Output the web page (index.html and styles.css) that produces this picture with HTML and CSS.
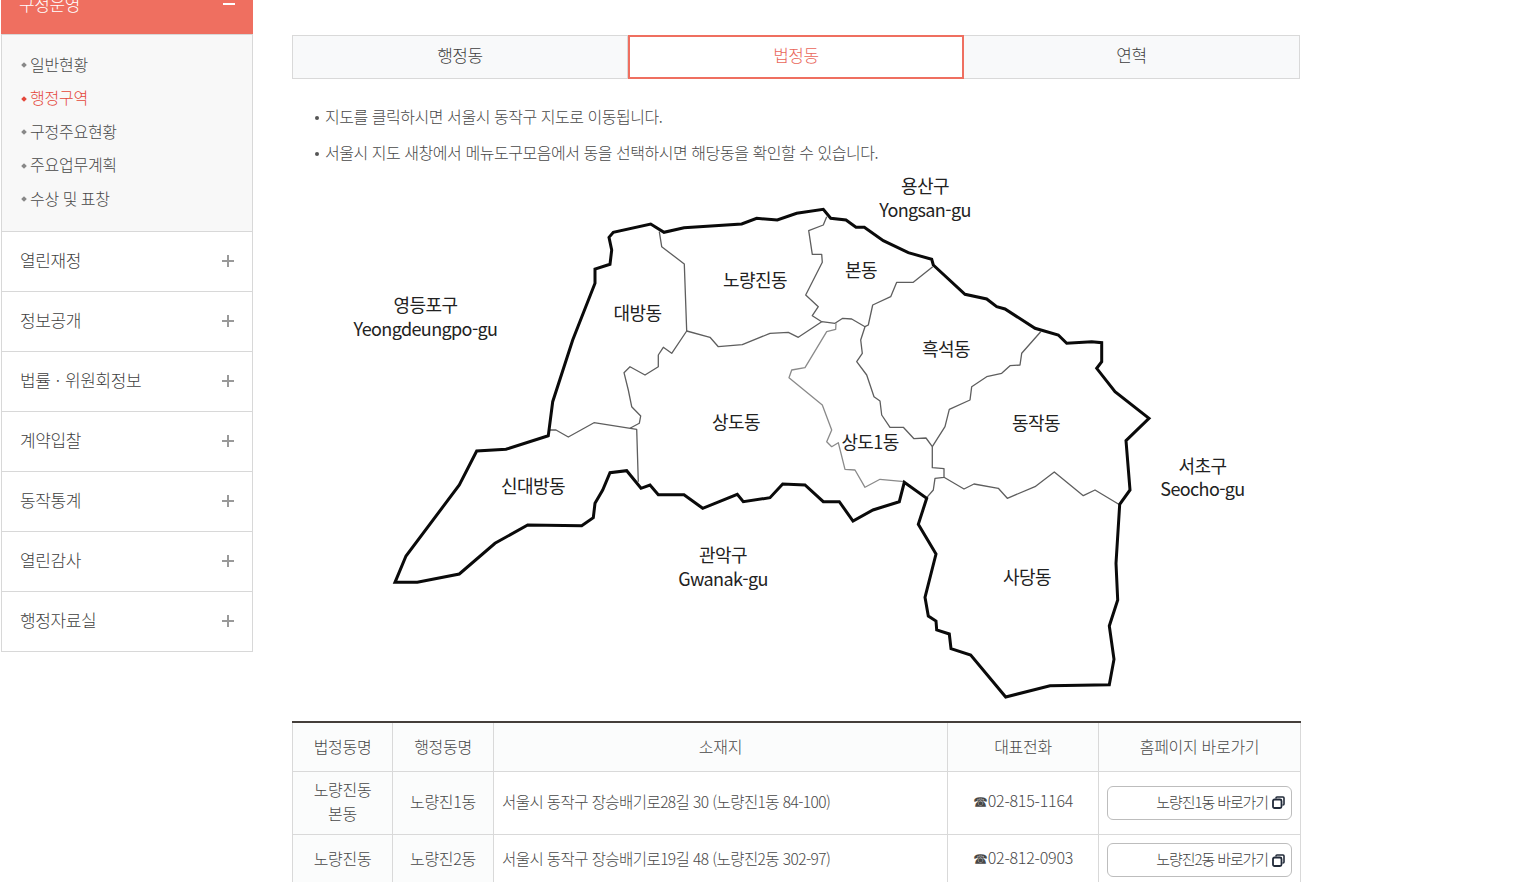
FILE: index.html
```html
<!DOCTYPE html>
<html lang="ko">
<head>
<meta charset="utf-8">
<title>행정구역 - 법정동</title>
<link rel="stylesheet" href="styles.css">
</head>
<body>
<div class="page">
  <aside class="side">
    <div class="side-head"><span>구정운영</span><svg class="ico" width="12" height="12" viewBox="0 0 12 12"><path d="M0 6H12" stroke="#fff" stroke-width="2"/></svg></div>
    <ul class="sub">
      <li>일반현황</li>
      <li class="on">행정구역</li>
      <li>구정주요현황</li>
      <li>주요업무계획</li>
      <li class="tight">수상 및 표창</li>
    </ul>
    <div class="side-item"><span>열린재정</span><svg class="ico" width="12" height="12" viewBox="0 0 12 12"><path d="M0 6H12M6 0V12" stroke="#999" stroke-width="2"/></svg></div>
    <div class="side-item"><span>정보공개</span><svg class="ico" width="12" height="12" viewBox="0 0 12 12"><path d="M0 6H12M6 0V12" stroke="#999" stroke-width="2"/></svg></div>
    <div class="side-item"><span class="wide">법률 · 위원회정보</span><svg class="ico" width="12" height="12" viewBox="0 0 12 12"><path d="M0 6H12M6 0V12" stroke="#999" stroke-width="2"/></svg></div>
    <div class="side-item"><span>계약입찰</span><svg class="ico" width="12" height="12" viewBox="0 0 12 12"><path d="M0 6H12M6 0V12" stroke="#999" stroke-width="2"/></svg></div>
    <div class="side-item"><span>동작통계</span><svg class="ico" width="12" height="12" viewBox="0 0 12 12"><path d="M0 6H12M6 0V12" stroke="#999" stroke-width="2"/></svg></div>
    <div class="side-item"><span>열린감사</span><svg class="ico" width="12" height="12" viewBox="0 0 12 12"><path d="M0 6H12M6 0V12" stroke="#999" stroke-width="2"/></svg></div>
    <div class="side-item"><span>행정자료실</span><svg class="ico" width="12" height="12" viewBox="0 0 12 12"><path d="M0 6H12M6 0V12" stroke="#999" stroke-width="2"/></svg></div>
  </aside>
  <main class="main">
    <div class="tabs">
      <div class="tab">행정동</div>
      <div class="tab active">법정동</div>
      <div class="tab">연혁</div>
    </div>
    <ul class="notes">
      <li>지도를 클릭하시면 서울시 동작구 지도로 이동됩니다.</li>
      <li>서울시 지도 새창에서 메뉴도구모음에서 동을 선택하시면 해당동을 확인할 수 있습니다.</li>
    </ul>
    <svg class="map" width="1009" height="550" viewBox="292 171 1009 550">
      <g class="thin">
        <polyline points="659.3,231.7 661.7,246.7 684.3,264 686.7,331 671.7,353.3 663.3,347.3 658.3,355 658.3,366.7 645,375 630,366.7 624,372.7 628.3,390 631.7,406.7 640.7,416 639.3,423.3 630,428.3"/>
        <polyline points="550,430 556,430 568.3,437 594,422.7 636.7,429.3 638.3,481.7"/>
        <polyline points="686.7,331 710,337.3 718.3,346.7 742.3,344.7 770,333.3 788.3,332.3 798.3,337.3 821.7,321.7 835,323.3 842.7,318.3 851.7,319 865,326.7"/>
        <polyline points="826.7,216.7 823.3,225 808.7,230.7 812.3,254.3 821.7,254.3 822.3,262.3 805.7,295 818.3,306.7 812.3,315.7 821.7,321.7"/>
        <polyline points="932.7,266.7 913.3,282.3 896.7,282.3 890.7,296.7 872.7,305 868.3,325 865,326.7 860.7,340 862.3,353.3 856.7,361.7 866.7,375 874,396.7 880,401 881.7,415 890,427.3 903.3,427.3 914,438.7 926,438 932.3,446.7 932.3,467.7 944,468.7 944,477.3 935,478.3 933.3,490 926.7,497.7"/>
        <polyline points="1040.7,331.7 1021.7,353.3 1020,365 1010,365.7 1001.7,373.3 986.7,376.7 971.7,386.7 970,400 949.3,409.3 945,426.7 932.3,446.7"/>
        <polyline points="944,477.3 964,489 974,484 998.3,488.3 1007.3,498.3 1035,486.7 1054.3,472 1083.3,495.7 1095,490 1120,505"/>
        <polyline class="light" points="836,323.3 835.7,329.3 826.7,331.7 805,367.7 791.7,370 789,377.7 822.3,405 831.7,430 826.7,441.7 831.7,446.7 838.3,442.7 845,469.3 855,470 865,487.3 880,479.3 904.3,481.7"/>
      </g>
      <polygon class="thick" points="548.3,435.7 506,449.3 476.7,451 459.3,485 406,556 395,582.3 417.3,582.3 459.3,574 495,543.3 527.7,525 581.7,525.7 593.3,517.7 595,503.3 602.7,490 610,472.7 626.7,470.7 641,488.3 650,485 658.3,494.7 684,494.7 702.7,508.3 737.3,494.3 743.3,501.7 770,497.7 782.7,484 805,485 823.3,501.7 839.3,501.7 853,521 873,510 899.3,501.7 904.3,482.3 926.7,498.3 918.3,524.3 936,554 925,597.3 928.3,616 936,621 936.7,630 949.3,634 951,648.7 970.7,655 1005.7,697 1050,685.7 1109.3,684.7 1114,659.3 1109.3,626 1117.7,600 1116,563.3 1119.7,504.3 1130,490 1126,440.7 1149,418.3 1115,391.7 1096.7,368.3 1101.7,361.7 1101.7,342.7 1091.7,341.7 1066.7,343.3 1058.3,335 1035,328.3 1005,309 996.7,306.7 986.7,299 965,294.3 933.3,265 931.7,259.3 908.3,252.7 883.3,240.7 864.3,227.3 856,227.3 846,220 830.7,218.3 823.3,209.3 796.7,213.3 777.3,220 756.7,218.3 741.7,224 684,227.7 664,232.3 650.7,224 613.3,232.3 609,237.3 611.7,250 610,264.3 595,269 595,283.3 572.7,340 552.7,401.7"/>
      <g class="labels">
        <text x="925" y="184.5">용산구</text><text x="925" y="209">Yongsan-gu</text>
        <text x="425.5" y="303.5">영등포구</text><text x="425.5" y="328">Yeongdeungpo-gu</text>
        <text x="637.5" y="311.5">대방동</text>
        <text x="755" y="279">노량진동</text>
        <text x="861" y="269">본동</text>
        <text x="946" y="347.5">흑석동</text>
        <text x="736" y="420.5">상도동</text>
        <text x="870" y="440.5">상도1동</text>
        <text x="1036" y="421.5">동작동</text>
        <text x="1202.5" y="464.5">서초구</text><text x="1202.5" y="488">Seocho-gu</text>
        <text x="533" y="485">신대방동</text>
        <text x="723" y="553.5">관악구</text><text x="723" y="578">Gwanak-gu</text>
        <text x="1027" y="575.5">사당동</text>
      </g>
    </svg>
    <table class="dong">
      <colgroup><col class="c0"><col class="c1"><col class="c3"><col class="c4"><col class="c5"></colgroup>
      <thead>
        <tr><th>법정동명</th><th>행정동명</th><th>소재지</th><th>대표전화</th><th>홈페이지 바로가기</th></tr>
      </thead>
      <tbody>
        <tr class="r1">
          <td class="tint">노량진동<br>본동</td><td class="tint">노량진1동</td>
          <td class="addr">서울시 동작구 장승배기로28길 30 (노량진1동 84-100)</td>
          <td class="tel"><span class="ph">☎</span>02-815-1164</td>
          <td class="btn"><a class="go">노량진1동 바로가기<svg width="13" height="13" viewBox="0 0 13 13"><path d="M4 2.5V2a1 1 0 0 1 1-1h6a1 1 0 0 1 1 1v6a1 1 0 0 1-1 1h-.5" fill="none" stroke="#222b3a" stroke-width="1.6"/><rect x="1" y="3.5" width="8.5" height="8.5" rx="1.5" fill="none" stroke="#222b3a" stroke-width="1.8"/></svg></a></td>
        </tr>
        <tr class="r2">
          <td class="tint">노량진동</td><td class="tint">노량진2동</td>
          <td class="addr">서울시 동작구 장승배기로19길 48 (노량진2동 302-97)</td>
          <td class="tel"><span class="ph">☎</span>02-812-0903</td>
          <td class="btn"><a class="go">노량진2동 바로가기<svg width="13" height="13" viewBox="0 0 13 13"><path d="M4 2.5V2a1 1 0 0 1 1-1h6a1 1 0 0 1 1 1v6a1 1 0 0 1-1 1h-.5" fill="none" stroke="#222b3a" stroke-width="1.6"/><rect x="1" y="3.5" width="8.5" height="8.5" rx="1.5" fill="none" stroke="#222b3a" stroke-width="1.8"/></svg></a></td>
        </tr>
      </tbody>
    </table>
  </main>
</div>
</body>
</html>
```
FILE: styles.css
```css
* { box-sizing: border-box; }
html, body { margin: 0; height: 100%; overflow: hidden; background: #fff; }
body { font-family: "Noto Sans CJK KR", "Noto Sans", sans-serif; font-weight: 300; color: #333; }
ul { list-style: none; margin: 0; padding: 0; }
.page { display: flex; align-items: flex-start; gap: 39px; margin-top: -26px; padding-left: 1px; }

.side { width: 252px; flex: none; }
.side-head, .side-item { display: flex; align-items: center; justify-content: space-between; padding: 0 18px 4px 18px; font-size: 17px; letter-spacing: -0.4px; }
.side-head { background: #ef6f60; color: #fff; height: 61px; padding-bottom: 2px; }
.side-head .ico { margin-top: 1px; }
.side-item { height: 60px; border: 1px solid #d8d8d8; border-top: 0; color: #3f3f3f; background: #fff; }
.side-item .ico { margin-top: 2px; }
.wide { word-spacing: 1px; }
.sub { background: #f8f8f8; border: 1px solid #d8d8d8; height: 198px; padding: 12.5px 0 0 20px; margin-top: -1px; }
.sub li { height: 33.5px; line-height: 33px; font-size: 16px; letter-spacing: -0.25px; color: #484848; display: flex; align-items: center; gap: 4px; }
.sub li::before { content: ""; width: 4px; height: 4px; background: #888; transform: rotate(45deg); flex: none; margin-top: 2px; }
.sub li.tight { word-spacing: -0.5px; }
.sub li.on { color: #e4473a; }
.sub li.on::before { background: #e4473a; }

.main { width: 1009px; flex: none; padding-top: 61px; }
.tabs { display: grid; grid-template-columns: repeat(3, 336px); height: 44px; }
.tab { background: #f8f9fa; border: 1px solid #d9d9d9; border-left: 0; display: flex; align-items: center; justify-content: center; font-size: 17px; letter-spacing: -0.4px; color: #3f3f3f; padding-bottom: 5px; }
.tab:first-child { border-left: 1px solid #d9d9d9; }
.tab.active { background: #fff; border: 2px solid #ef6f60; color: #e9665a; }

.notes { padding: 19px 0 0 23px; height: 92px; }
.notes li { height: 36px; line-height: 36px; font-size: 16px; letter-spacing: -0.46px; color: #484848; display: flex; align-items: center; gap: 6px; white-space: nowrap; }
.notes li::before { content: ""; width: 4px; height: 4px; border-radius: 50%; background: #555; flex: none; margin-top: 3px; }

.map { display: block; }
.thin polyline { fill: none; stroke: #5e5e5e; stroke-width: 1.3; stroke-linejoin: round; }
.thin polyline.light { stroke: #8a8a8a; }
.thick { fill: none; stroke: #0a0a0a; stroke-width: 3; stroke-linejoin: miter; }
.labels text { font-family: "Noto Sans CJK KR", "Noto Sans", sans-serif; font-size: 18px; font-weight: 400; letter-spacing: -0.62px; text-anchor: middle; dominant-baseline: central; fill: #222; }

.dong { width: 1008px; table-layout: fixed; border-collapse: collapse; border-top: 2px solid #443f3b; font-size: 16px; letter-spacing: -0.3px; color: #484848; }
.c0 { width: 100px; }
.c1 { width: 101px; }
.c3 { width: 454px; }
.c4 { width: 151px; }
.c5 { width: 202px; }
.dong th, .dong td { border: 1px solid #d9d9d9; text-align: center; padding: 0 0 4px; font-weight: 300; line-height: 24px; }
.dong th { height: 49px; background: #fbfcfc; padding-bottom: 2px; }
.dong tbody td.tint { background: #fbfcfc; }
.r1 td { height: 63px; }
.r2 td { height: 52px; }
.dong td.btn { padding: 0; }
.dong td.addr { font-size: 15.5px; letter-spacing: -0.57px; text-align: left; padding-left: 8px; }
.tel { letter-spacing: -0.2px; }
.ph { font-family: "DejaVu Sans", sans-serif; font-size: 15px; color: #484848; }
.go { display: flex; align-items: center; justify-content: flex-end; gap: 4px; width: 185px; height: 34px; margin-left: 8px; padding: 0 6px 2px 0; border: 1px solid #bdbdbd; border-radius: 6px; background: #fff; font-size: 15px; letter-spacing: -1.1px; color: #3f3f3f; }
.go svg { margin-top: 2px; }
```
